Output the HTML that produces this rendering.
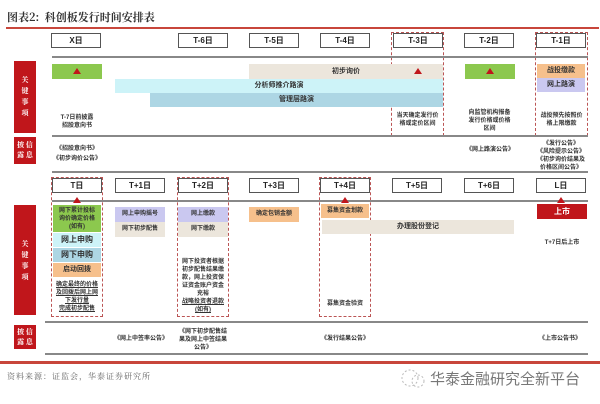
<!DOCTYPE html>
<html><head><meta charset="utf-8"><style>
*{margin:0;padding:0;box-sizing:border-box}
body{width:600px;height:404px;background:#fff;position:relative;overflow:hidden;font-family:"Liberation Sans","Noto Sans CJK SC",sans-serif;color:#222}
.a{position:absolute}
.bx{position:absolute;border:1px solid #555;background:#fff;font-size:8px;font-weight:bold;text-align:center;line-height:13px;height:15px;width:50px}
.dash{position:absolute;border:1px dashed #b55;}
.ln{position:absolute;height:2px;background:#888}
.lab{position:absolute;background:#c0161b;color:#fff;font-size:7px;font-weight:bold;text-align:center;width:22px;font-family:"Noto Serif CJK SC",serif}
.bar{position:absolute;font-size:7px;font-weight:bold;text-align:center;color:#333}
.t{position:absolute;font-size:6px;font-weight:bold;text-align:center;line-height:8px;color:#333}
.tri{position:absolute;width:0;height:0;border-left:4px solid transparent;border-right:4px solid transparent;border-bottom:6px solid #c0161b}
</style></head><body>
<div class="a" style="left:7px;top:9px;font-size:11px;font-weight:bold;color:#333;font-family:'Noto Serif CJK SC',serif">图表2:&nbsp;&nbsp;科创板发行时间安排表</div>
<div class="a" style="left:6px;top:27px;width:593px;height:2px;background:#c8463b"></div>

<div class="dash" style="left:391px;top:32px;width:53px;height:104px"></div>
<div class="dash" style="left:535px;top:32px;width:53px;height:104px"></div>
<div class="bx" style="left:51px;top:33px">X日</div>
<div class="bx" style="left:178px;top:33px">T-6日</div>
<div class="bx" style="left:249px;top:33px">T-5日</div>
<div class="bx" style="left:320px;top:33px">T-4日</div>
<div class="bx" style="left:393px;top:33px">T-3日</div>
<div class="bx" style="left:464px;top:33px">T-2日</div>
<div class="bx" style="left:536px;top:33px">T-1日</div>
<div class="ln" style="left:52px;top:56px;width:536px"></div>

<div class="lab" style="left:14px;top:61px;height:72px;padding-top:14px;line-height:11px">关<br>键<br>事<br>项</div>
<div class="lab" style="left:14px;top:137px;height:27px;padding-top:3px;line-height:10px">披 信<br>露 息</div>

<div class="bar" style="left:52px;top:64px;width:50px;height:15px;background:#8cc84e"></div><div class="tri" style="left:73px;top:68px"></div>
<div class="bar" style="left:249px;top:64px;width:194px;height:15px;background:#ece6dc;line-height:15px">初步询价</div><div class="tri" style="left:414px;top:68px"></div>
<div class="bar" style="left:115px;top:79px;width:328px;height:14px;background:#cdf3f8;line-height:14px">分析师推介路演</div>
<div class="bar" style="left:150px;top:93px;width:293px;height:14px;background:#add6e4;line-height:14px">管理层路演</div>
<div class="bar" style="left:465px;top:64px;width:50px;height:15px;background:#8cc84e"></div><div class="tri" style="left:486px;top:68px"></div>
<div class="bar" style="left:537px;top:64px;width:48px;height:14px;background:#f6c08c;line-height:14px">战投缴款</div>
<div class="bar" style="left:537px;top:78px;width:48px;height:14px;background:#cac8f0;line-height:14px">网上路演</div>

<div class="t" style="left:52px;top:114px;width:50px">T-7日前披露<br>招股意向书</div>
<div class="t" style="left:391px;top:112px;width:53px">当天确定发行价<br>格或定价区间</div>
<div class="t" style="left:462px;top:109px;width:55px">向监管机构报备<br>发行价格或价格<br>区间</div>
<div class="t" style="left:535px;top:112px;width:53px">战投预先按照价<br>格上限缴款</div>

<div class="ln" style="left:52px;top:135px;width:536px"></div>
<div class="t" style="left:52px;top:145px;width:50px">《招股意向书》</div>
<div class="t" style="left:50px;top:155px;width:54px">《初步询价公告》</div>
<div class="t" style="left:462px;top:146px;width:56px">《网上路演公告》</div>
<div class="t" style="left:532px;top:140px;width:58px">《发行公告》<br>《风险提示公告》<br>《初步询价结果及<br>价格区间公告》</div>

<div class="ln" style="left:52px;top:171px;width:536px"></div>
<div class="dash" style="left:51px;top:177px;width:52px;height:140px"></div>
<div class="dash" style="left:177px;top:177px;width:52px;height:140px"></div>
<div class="dash" style="left:319px;top:177px;width:52px;height:140px"></div>
<div class="bx" style="left:52px;top:178px">T日</div>
<div class="bx" style="left:115px;top:178px">T+1日</div>
<div class="bx" style="left:178px;top:178px">T+2日</div>
<div class="bx" style="left:249px;top:178px">T+3日</div>
<div class="bx" style="left:320px;top:178px">T+4日</div>
<div class="bx" style="left:392px;top:178px">T+5日</div>
<div class="bx" style="left:464px;top:178px">T+6日</div>
<div class="bx" style="left:536px;top:178px">L日</div>
<div class="ln" style="left:52px;top:200px;width:536px"></div>
<div class="tri" style="left:73px;top:197px"></div><div class="tri" style="left:341px;top:197px"></div><div class="tri" style="left:557px;top:197px"></div>

<div class="lab" style="left:14px;top:205px;height:110px;padding-top:34px;line-height:11px">关<br>键<br>事<br>项</div>
<div class="lab" style="left:14px;top:325px;height:24px;padding-top:2px;line-height:10px">披 信<br>露 息</div>

<div class="t" style="left:53px;top:205px;width:48px;height:27px;background:#8cc84e;padding-top:2px">网下累计投标<br>询价确定价格<br>(如有)</div>
<div class="bar" style="left:53px;top:233px;width:48px;height:14px;background:#cdf3f8;line-height:14px;font-size:8px">网上申购</div>
<div class="bar" style="left:53px;top:248px;width:48px;height:14px;background:#add6e4;line-height:14px;font-size:8px">网下申购</div>
<div class="bar" style="left:53px;top:263px;width:48px;height:14px;background:#f6c08c;line-height:14px">启动回拨</div>
<div class="t" style="left:52px;top:281px;width:50px;text-decoration:underline">确定最终的价格<br>及回拨后网上网<br>下发行量<br>完成初步配售</div>

<div class="t" style="left:115px;top:207px;width:50px;height:15px;background:#cac8f0;line-height:15px">网上申购摇号</div>
<div class="t" style="left:115px;top:222px;width:50px;height:15px;background:#ece6dc;line-height:15px">网下初步配售</div>
<div class="t" style="left:178px;top:207px;width:50px;height:15px;background:#cac8f0;line-height:15px">网上缴款</div>
<div class="t" style="left:178px;top:222px;width:50px;height:15px;background:#ece6dc;line-height:15px">网下缴款</div>
<div class="t" style="left:176px;top:258px;width:54px">网下投资者根据<br>初步配售结果缴<br>款，网上投资保<br>证资金账户资金<br>充裕<br><u>战略投资者退款</u><br><u>(如有)</u></div>
<div class="t" style="left:249px;top:207px;width:50px;height:15px;background:#f6c08c;line-height:15px">确定包销金额</div>
<div class="t" style="left:321px;top:204px;width:48px;height:14px;background:#f6c08c;line-height:14px">募集资金划款</div>
<div class="bar" style="left:322px;top:220px;width:192px;height:14px;background:#ece6dc;line-height:14px">办理股份登记</div>
<div class="bar" style="left:537px;top:204px;width:50px;height:15px;background:#c0161b;color:#fff;line-height:15px;font-size:8px">上市</div>
<div class="t" style="left:535px;top:239px;width:54px">T+7日后上市</div>
<div class="t" style="left:320px;top:300px;width:50px">募集资金验资</div>

<div class="ln" style="left:45px;top:321px;width:543px"></div>
<div class="t" style="left:105px;top:335px;width:72px">《网上中签率公告》</div>
<div class="t" style="left:173px;top:328px;width:60px">《网下初步配售结<br>果及网上中签结果<br>公告》</div>
<div class="t" style="left:315px;top:335px;width:60px">《发行结果公告》</div>
<div class="t" style="left:530px;top:335px;width:60px">《上市公告书》</div>
<div class="ln" style="left:45px;top:353px;width:543px"></div>
<div class="a" style="left:0;top:361px;width:600px;height:3px;background:#c8463b"></div>

<div class="a" style="left:7px;top:371px;font-size:8px;color:#666;font-family:'Noto Serif CJK SC',serif;letter-spacing:1px">资料来源：证监会，华泰证券研究所</div>
<svg class="a" style="left:400px;top:368px" width="28" height="22"><circle cx="10" cy="10" r="8" fill="none" stroke="#bbb" stroke-dasharray="2 2"/><circle cx="18" cy="13" r="6" fill="none" stroke="#bbb" stroke-dasharray="2 2"/></svg>
<div class="a" style="left:430px;top:368px;font-size:15px;color:#777">华泰金融研究全新平台</div>
</body></html>
